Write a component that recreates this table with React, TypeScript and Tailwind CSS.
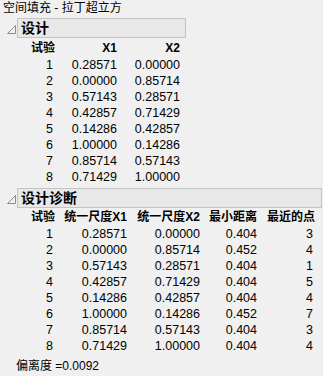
import React from "react"

const font = { fontFamily: '"Liberation Sans", "Noto Sans CJK SC", sans-serif' }

const design = [
  ["1", "0.28571", "0.00000"],
  ["2", "0.00000", "0.85714"],
  ["3", "0.57143", "0.28571"],
  ["4", "0.42857", "0.71429"],
  ["5", "0.14286", "0.42857"],
  ["6", "1.00000", "0.14286"],
  ["7", "0.85714", "0.57143"],
  ["8", "0.71429", "1.00000"],
]

const diag = [
  ["1", "0.28571", "0.00000", "0.404", "3"],
  ["2", "0.00000", "0.85714", "0.452", "4"],
  ["3", "0.57143", "0.28571", "0.404", "1"],
  ["4", "0.42857", "0.71429", "0.404", "5"],
  ["5", "0.14286", "0.42857", "0.404", "4"],
  ["6", "1.00000", "0.14286", "0.452", "7"],
  ["7", "0.85714", "0.57143", "0.404", "3"],
  ["8", "0.71429", "1.00000", "0.404", "4"],
]

function Outline({ title, width }: { title: string; width: string }) {
  return (
    <div className="flex items-center pl-[7px] h-[20px]">
      <svg width="9" height="9" viewBox="0 0 9 9" className="mr-[1px] mt-[2px]">
        <path d="M0.5 8.5 L8.5 8.5 L8.5 0.5 Z" fill="none" stroke="#8c8c8c" strokeWidth="1" />
      </svg>
      <div
        className={`${width} h-[20px] border border-[#c4c4c4] bg-[#e8e8e8] pl-[3px] text-[14px] font-bold leading-[18px] text-black`}
      >
        {title}
      </div>
    </div>
  )
}

export default function App() {
  return (
    <div className="w-[323px] h-[376px] bg-[#f0f0f0] text-[12px] text-black overflow-hidden" style={font}>
      <div className="h-[18px] pl-[3px] leading-[17px]">空间填充 - 拉丁超立方</div>
      <Outline title="设计" width="w-[169px]" />
      <div className="grid grid-cols-[55px_62px_63px] mt-[2px]">
        <div className="text-right font-bold leading-[17px]">试验</div>
        <div className="text-right font-bold leading-[17px]">X1</div>
        <div className="text-right font-bold leading-[17px]">X2</div>
        {design.map((r) => (
          <React.Fragment key={r[0]}>
            <div className="text-right pr-[2px] text-[12.5px] leading-[16px]">{r[0]}</div>
            <div className="text-right text-[12.5px] leading-[16px]">{r[1]}</div>
            <div className="text-right text-[12.5px] leading-[16px]">{r[2]}</div>
          </React.Fragment>
        ))}
      </div>
      <div className="mt-[3px]">
        <Outline title="设计诊断" width="w-[305px]" />
      </div>
      <div className="grid grid-cols-[55px_72px_73px_57px_58px]">
        <div className="text-right font-bold leading-[18px]">试验</div>
        <div className="text-right font-bold leading-[18px]">统一尺度X1</div>
        <div className="text-right font-bold leading-[18px]">统一尺度X2</div>
        <div className="text-right font-bold leading-[18px]">最小距离</div>
        <div className="text-right font-bold leading-[18px]">最近的点</div>
        {diag.map((r) => (
          <React.Fragment key={r[0]}>
            <div className="text-right pr-[2px] text-[12.5px] leading-[16px]">{r[0]}</div>
            <div className="text-right text-[12.5px] leading-[16px]">{r[1]}</div>
            <div className="text-right text-[12.5px] leading-[16px]">{r[2]}</div>
            <div className="text-right text-[12.5px] leading-[16px]">{r[3]}</div>
            <div className="text-right pr-[2px] text-[12.5px] leading-[16px]">{r[4]}</div>
          </React.Fragment>
        ))}
      </div>
      <div className="mt-[4px] pl-[16px] leading-[16px]">偏离度 =0.0092</div>
    </div>
  )
}
